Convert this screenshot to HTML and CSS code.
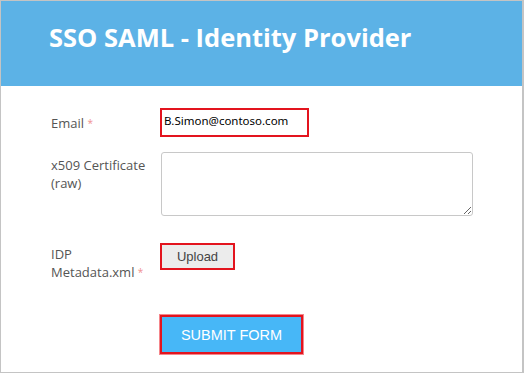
FILE: index.html
```html
<!DOCTYPE html>
<html lang="en">
<head>
    <meta charset="UTF-8">
    <meta name="viewport" content="width=device-width, initial-scale=1.0">
    <title>SSO SAML - Identity Provider</title>
    <link rel="stylesheet" href="styles.css">
</head>
<body>
    <div class="frame">
        <header class="banner">
            <h1>SSO SAML - Identity Provider</h1>
        </header>

        <form class="form" onsubmit="return false">
            <div class="row row-email">
                <label class="label" for="email">Email <span class="req">*</span></label>
                <input class="email-input" id="email" type="text" value="B.Simon@contoso.com">
            </div>

            <div class="row row-cert">
                <label class="label" for="cert">x509 Certificate<br>(raw)</label>
                <textarea class="cert-input" id="cert"></textarea>
            </div>

            <div class="row row-upload">
                <label class="label">IDP<br>Metadata.xml <span class="req">*</span></label>
                <div><button type="button" class="upload-btn">Upload</button></div>
            </div>

            <div class="row row-submit">
                <span></span>
                <div><button type="submit" class="submit-btn">SUBMIT FORM</button></div>
            </div>
        </form>
    </div>
</body>
</html>
```

FILE: styles.css
```css
* {
    margin: 0;
    padding: 0;
    box-sizing: border-box;
}

body {
    background: #fff;
    font-family: 'Open Sans', 'Noto Sans', sans-serif;
}

.frame {
    width: 524px;
    height: 373px;
    border: 1px solid #c4c4c4;
    border-right-width: 2px;
    background: #fff;
}

.banner {
    height: 85px;
    background: #5cb2e6;
    padding: 17px 0 0 48px;
}

.banner h1 {
    font-size: 25.5px;
    line-height: 38px;
    font-weight: 700;
    color: #fff;
}

.form {
    padding: 22px 0 0 50px;
}

.row {
    display: grid;
    grid-template-columns: 109px 1fr;
    align-items: start;
}

.label {
    font-size: 13px;
    line-height: 18px;
    color: #555;
}

.req {
    color: #f09090;
    font-size: 10px;
    vertical-align: 1px;
}

.row-email {
    margin-bottom: 15px;
}

.row-email .label {
    padding-top: 6px;
}

.row-cert {
    margin-bottom: 27px;
}

.row-cert .label {
    padding-top: 4px;
}

.row-upload {
    margin-bottom: 34px;
}

.row-upload .label {
    padding-top: 2px;
}

.email-input {
    width: 149px;
    height: 29px;
    border: 2px solid #e3141e;
    padding: 4px 2px 9px;
    font-family: 'Noto Sans', sans-serif;
    font-size: 11.5px;
    line-height: 14px;
    color: #000;
    vertical-align: top;
    outline: none;
}

.cert-input {
    display: block;
    width: 312px;
    height: 64px;
    margin-left: 1px;
    border: 1px solid #c8c8c8;
    border-radius: 3px;
    font-family: 'Noto Sans', sans-serif;
}

.upload-btn {
    width: 75px;
    height: 27px;
    background: #ececec;
    border: 2px solid #e3141e;
    font-family: 'Liberation Sans', Arial, sans-serif;
    font-size: 13px;
    color: #444;
}

.submit-btn {
    width: 143px;
    height: 39px;
    background: #47b7f7;
    border: 2px solid #e3141e;
    box-shadow: 0 0 0 1px #f5868b;
    font-family: 'Liberation Sans', Arial, sans-serif;
    font-size: 14.5px;
    color: #fff;
}
```
